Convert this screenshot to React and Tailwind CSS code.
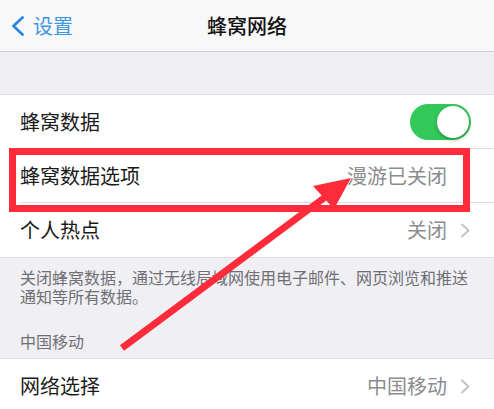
import React from "react";

const font = { fontFamily: '"Noto Sans CJK SC", "Noto Sans", sans-serif' };

function Chevron({ hidden }) {
  return (
    <svg width="11" height="15" viewBox="0 0 11 15" className={`shrink-0 ${hidden ? "invisible" : ""}`}>
      <path d="M2 1.5 L8.5 7.5 L2 13.5" fill="none" stroke="#c4c4c8" strokeWidth="2" strokeLinecap="round" strokeLinejoin="round" />
    </svg>
  );
}

function Row({ label, value, chevron, hiddenChevron, toggle, last }) {
  return (
    <div className="flex h-[54px] items-center pl-[20px]">
      <div className={`flex h-full flex-1 items-center pr-[23px] ${last ? "" : "border-b border-[#dcdce0]"}`}>
        <span className="flex-1 text-[20px] leading-[24px] text-[#1a1a1a]">{label}</span>
        {value && <span className="text-[20px] leading-[24px] text-[#8c8c90]">{value}</span>}
        {chevron && <span className="ml-[13px] flex"><Chevron hidden={hiddenChevron} /></span>}
        {toggle && (
          <div className="flex h-[36px] w-[61px] items-center justify-end rounded-full bg-[#34c759] p-[2px]">
            <div className="h-[32px] w-[32px] rounded-full bg-white shadow-[0_2px_4px_rgba(0,0,0,0.25)]" />
          </div>
        )}
      </div>
    </div>
  );
}

export default function App() {
  return (
    <div className="relative h-[409px] w-[494px] overflow-hidden bg-[#efeff4]" style={font}>
      <div className="relative flex h-[52px] items-center justify-center border-b border-[#cfcfd3] bg-[#f8f8f8]">
        <div className="absolute left-[11px] top-0 flex h-full items-center">
          <svg width="14" height="20" viewBox="0 0 14 20">
            <path d="M11.5 1.5 L2.5 10 L11.5 18.5" fill="none" stroke="#2f86e0" strokeWidth="2.8" strokeLinecap="round" strokeLinejoin="round" />
          </svg>
          <span className="ml-[8px] text-[20px] leading-[24px] text-[#4196e2]">设置</span>
        </div>
        <span className="text-[20px] font-medium leading-[24px] text-[#111]">蜂窝网络</span>
      </div>
      <div className="h-[42px]" />
      <div className="border-y border-[#dcdce0] bg-white">
        <Row label="蜂窝数据" toggle />
        <Row label="蜂窝数据选项" value="漫游已关闭" chevron hiddenChevron />
        <Row label="个人热点" value="关闭" chevron last />
      </div>
      <div className="px-[20px] pb-[7px] pt-[10px]">
        <p className="text-[16px] leading-[19px] text-[#6f6f74]">
          关闭蜂窝数据，通过无线局域网使用电子邮件、网页浏览和推送通知等所有数据。
        </p>
        <p className="mt-[26px] text-[16px] leading-[19px] text-[#6f6f74]">中国移动</p>
      </div>
      <div className="border-t border-[#dcdce0] bg-white">
        <Row label="网络选择" value="中国移动" chevron last />
      </div>

      <div className="absolute left-[9px] top-[148px] h-[64px] w-[461px] border-[7px] border-[#fe2b3b]" />
      <svg className="pointer-events-none absolute left-0 top-0" width="494" height="409" viewBox="0 0 494 409">
        <line x1="122" y1="348" x2="328" y2="195" stroke="#fe2b3b" strokeWidth="7" />
        <polygon points="351,178 313,186 334,209" fill="#fe2b3b" />
      </svg>
    </div>
  );
}
